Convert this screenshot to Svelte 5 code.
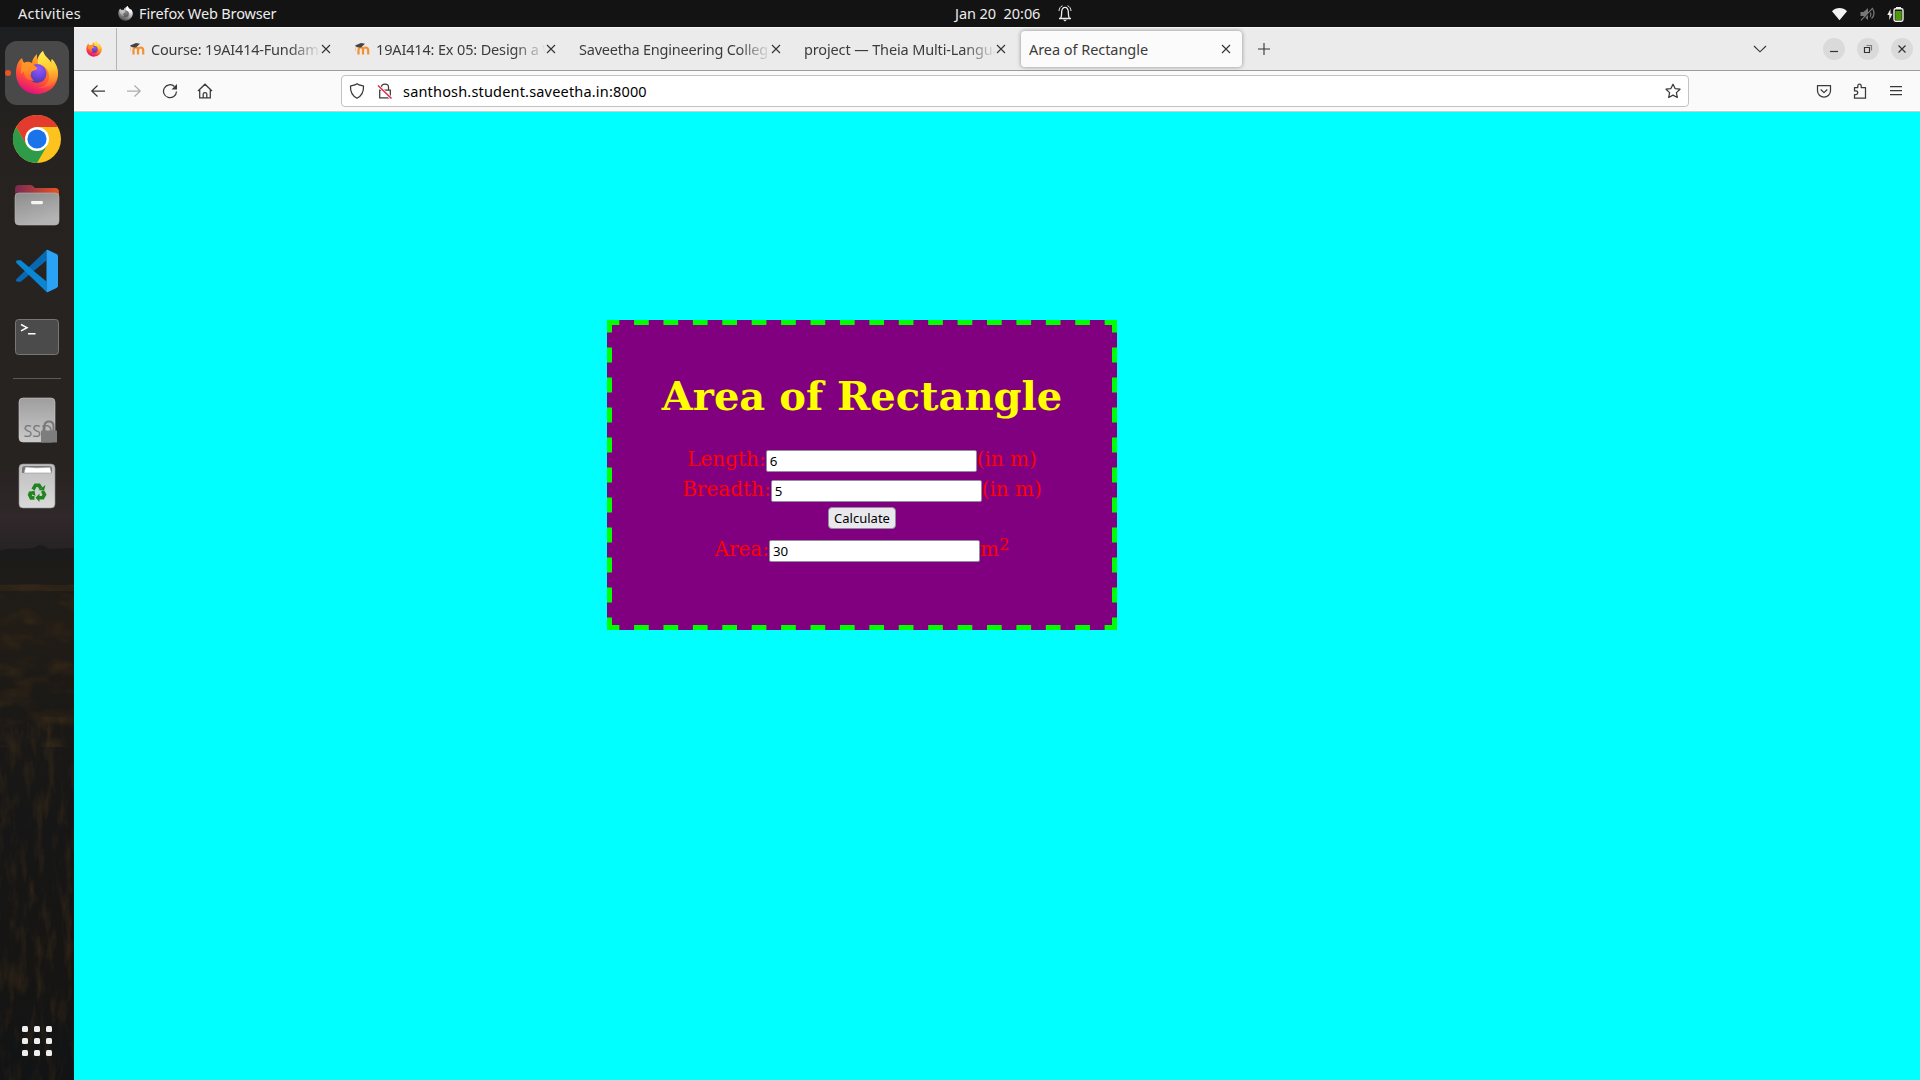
<script>
  const tabs = [
    { title: 'Course: 19AI414-Fundame', moodle: true, cls: 't1' },
    { title: '19AI414: Ex 05: Design a W', moodle: true, cls: 't2' },
    { title: 'Saveetha Engineering Colleg', moodle: false, cls: 't3' },
    { title: 'project — Theia Multi-Langua', moodle: false, cls: 't4' },
    { title: 'Area of Rectangle', moodle: false, active: true, cls: 't5' }
  ];
  let length = $state('6');
  let breadth = $state('5');
  let area = $state('30');
  const calculate = () => (area = String(Number(length) * Number(breadth)));
  const grid = [0, 1, 2];
</script>

{#snippet firefox()}
  <path d="M22 3c-3 3-5 6-5 9-3-2-6-1-8 0-1-2-2-3-2-5C4 9 1 14 1 22c0 12 9 21 21 21s21-9 21-20c0-7-4-12-7-15 0 2 0 3 0 4-2-5-7-7-8-12-3 2-5 6-6 9z" fill="url(#fxBody)" />
  <path d="M28 0c-4 4-6 8-5 13 7 1 12 7 11 14-1 6-5 9-11 10 11 1 20-5 20-15 0-6-3-11-6-14v5C35 8 29 6 28 0z" fill="url(#fxFlame)" />
  <circle cx="22" cy="22.500" r="9.500" fill="url(#fxGlobe)" />
  <path d="M7 7c0 2 1 4 2 5 3-1 7 0 9 1 2 3 5 3 4 5-2 2-6 1-6 5-1 2 1 5 3 7-8 0-10-5-10-9-1 0-2 1-3 2 0-6 1-11 1-16z" fill="url(#fxHead)" />
{/snippet}

{#snippet cross()}
  <svg class="cross" viewBox="0 0 10 10" width="10" height="10"><path d="M1 1l8 8M9 1l-8 8" /></svg>
{/snippet}

<svg class="defs" width="0" height="0" aria-hidden="true">
  <defs>
    <linearGradient id="fxBody" x1="0.8" y1="0" x2="0.4" y2="1">
      <stop offset="0" stop-color="#ffd23c" /><stop offset=".4" stop-color="#ff8a23" /><stop offset=".7" stop-color="#ff4a3c" /><stop offset="1" stop-color="#e3107c" />
    </linearGradient>
    <linearGradient id="fxFlame" x1="0.3" y1="0" x2="0.4" y2="1">
      <stop offset="0" stop-color="#fff44f" /><stop offset=".5" stop-color="#ffc832" /><stop offset="1" stop-color="#ff8a2a" stop-opacity=".3" />
    </linearGradient>
    <radialGradient id="fxGlobe" cx=".6" cy=".25" r=".8">
      <stop offset="0" stop-color="#9059ff" /><stop offset=".5" stop-color="#7146e0" /><stop offset="1" stop-color="#4a3a9a" />
    </radialGradient>
    <linearGradient id="fxHead" x1="0" y1="0" x2="0" y2="1">
      <stop offset="0" stop-color="#ff9a2a" /><stop offset=".5" stop-color="#ff9126" /><stop offset="1" stop-color="#ff5a34" />
    </linearGradient>
    <linearGradient id="folderBack"><stop offset="0" stop-color="#772953" /><stop offset="1" stop-color="#e95420" /></linearGradient>
    <linearGradient id="grey" x1="0" y1="0" x2=".4" y2="1"><stop offset="0" stop-color="#8c8c8c" /><stop offset="1" stop-color="#b4b4b4" /></linearGradient>
    <linearGradient id="drive" x1="0" y1="0" x2="0" y2="1"><stop offset="0" stop-color="#9e9e9e" /><stop offset="1" stop-color="#cacaca" /></linearGradient>
    <linearGradient id="bin" x1="0" y1="0" x2="0" y2="1"><stop offset="0" stop-color="#bdbdbd" /><stop offset="1" stop-color="#dadada" /></linearGradient>
  </defs>
</svg>

<div class="desktop">
  <header class="topbar">
    <span class="activities">Activities</span>
    <svg class="fxgrey" viewBox="0 0 44 44" width="15" height="15">{@render firefox()}</svg>
    <span class="appname">Firefox Web Browser</span>
    <span class="clock">Jan 20&nbsp; 20:06</span>
    <svg class="bell" viewBox="0 0 14 17" width="14" height="17" fill="none" stroke="#eee">
      <path d="M1 13.500h12M2.800 13c1-2 .7-4 .9-6.500C4 3.500 5 2.300 7 2.300s3 1.200 3.300 4.200c.2 2.500-.1 4.500.9 6.500" stroke-width="1.300" />
      <path d="M1 6C1 3.500 2.500 1.300 4.500.8M13 6c0-2.500-1.500-4.700-3.500-5.200" />
      <path d="M5 14.800h4L7 16.500z" fill="#eee" stroke="none" />
    </svg>
    <svg class="tray" viewBox="0 0 76 18" width="76" height="18">
      <path d="M1 6.200C5 2 12 2 16 6.200L8.500 15.300z" fill="#f2f2f2" />
      <g fill="#777" stroke="none"><path d="M29.500 7h3L37 3v12l-4.500-4h-3z" /></g>
      <path d="M42 4.500c1.400 2.700 1.400 6.300-1.500 9M39.300 7c.8 1.500.8 3 0 4.700M30 15.500L42 3" fill="none" stroke="#777" stroke-width="1.300" />
      <path d="M30.800 15.800L41 5.300" stroke="#131313" stroke-width="1" />
      <path d="M59.500 4l-3.200 6h2v5l3.200-6.200h-2z" fill="#f2f2f2" />
      <path d="M65 2h5v2h-5z" fill="#f2f2f2" />
      <rect x="63" y="3.700" width="9" height="12.600" rx="1.700" fill="#131313" stroke="#f2f2f2" stroke-width="1.400" />
      <rect x="64.300" y="6" width="6.400" height="9" fill="#4e9a06" />
    </svg>
  </header>

  <div class="main">
    <nav class="dock">
      <svg class="wall" viewBox="0 0 74 1053" width="74" height="1053" preserveAspectRatio="none" aria-hidden="true">
        <defs>
          <filter id="grass" x="0" y="0" width="1" height="1" color-interpolation-filters="sRGB">
            <feTurbulence type="fractalNoise" baseFrequency=".11 .03" numOctaves="4" seed="8" />
            <feColorMatrix values="0 0 0 0 .32  0 0 0 0 .22  0 0 0 0 .11  2.600 0 0 0 -1.200" />
          </filter>
          <filter id="field" x="0" y="0" width="1" height="1" color-interpolation-filters="sRGB">
            <feTurbulence type="fractalNoise" baseFrequency=".03 .06" numOctaves="3" seed="3" />
            <feColorMatrix values="0 0 0 0 .32  0 0 0 0 .22  0 0 0 0 .09  2.600 0 0 0 -1.200" />
          </filter>
        </defs>
        <path d="M0 524c8-3 12-2 18-2l16-1 5-3 6 1 3 3 26-1v12H0z" fill="#1b1b1c" />
        <rect y="557" width="74" height="163" filter="url(#field)" opacity=".35" />
        <rect y="690" width="74" height="363" filter="url(#grass)" opacity=".35" />
        <rect y="558" width="74" height="6" fill="#48351c" opacity=".3" />
      </svg>
      <div class="slot"><svg viewBox="0 40 74 66" width="74" height="66">
        <rect x="5" y="41" width="64" height="64" rx="12" fill="#494949" />
        <circle cx="8" cy="73" r="3" fill="#e95420" />
        <g transform="translate(15 51)">{@render firefox()}</g>
      </svg></div>
      <div class="slot"><svg viewBox="-37 -33 74 66" width="74" height="66">
        <circle r="24" fill="#fcc31e" />
        <path d="M-20.800-12A24 24 0 0 1 20.800-12H0L-10.400 6z" fill="#e33b2e" />
        <path d="M-20.800-12A24 24 0 0 0 0 24L10.400 6 0 12-10.400 6z" fill="#2d9b47" />
        <circle r="12" fill="#fff" /><circle r="9.600" fill="#1a73e8" />
      </svg></div>
      <div class="slot"><svg viewBox="0 172 74 66" width="74" height="66">
        <path d="M15 204v-15q0-4 4-4h11.500q2 0 3 1.500l1.500 1.500h20q4 0 4 4v12z" fill="url(#folderBack)" />
        <rect x="15" y="193" width="44" height="32" rx="4" fill="url(#grey)" stroke="#bbb" stroke-width=".6" />
        <rect x="31" y="201" width="12" height="3.200" rx="1.400" fill="#f5f5f5" />
      </svg></div>
      <div class="slot"><svg viewBox="0 238 74 66" width="74" height="66">
        <path d="M16.500 281.500q-1-1.500 0-2.500L46.500 250v10.500L21 281.500q-1 .8-2 .3z" fill="#0868b0" />
        <path d="M16.500 260.500q-1 1.500 0 2.500L46.500 292v-10.500L21 260.500q-1-.8-2-.3z" fill="#0a86d2" />
        <path d="M46.500 250q.5-.3 1.500 0l8.500 4q1.500.8 1.500 2.300v29.400q0 1.500-1.500 2.300L48 292q-1 .3-1.500 0z" fill="#2aa2f5" />
      </svg></div>
      <div class="slot"><svg viewBox="0 304 74 66" width="74" height="66">
        <rect x="15.500" y="319.500" width="43" height="35" rx="3" fill="#4b4b4b" stroke="#777" />
        <path d="M21 324.500l6 3.200-6 3.200M28 333.800h7.500" fill="none" stroke="#fff" stroke-width="1.500" />
      </svg></div>
      <div class="sep"></div>
      <div class="slot"><svg viewBox="0 387 74 66" width="74" height="66">
        <rect x="19" y="398" width="36" height="44" rx="4" fill="url(#drive)" stroke="#c9c9c9" stroke-width=".6" />
        <text class="ssd" x="23.500" y="436.500">SSD</text>
        <path d="M44.500 431v-5q0-4.500 4.500-4.500t4.500 4.500v5" fill="none" stroke="#777" stroke-width="2" />
        <rect x="41" y="430.500" width="16" height="12" rx=".5" fill="#7d7d7d" />
      </svg></div>
      <div class="slot"><svg viewBox="0 453 74 66" width="74" height="66">
        <rect x="19" y="464" width="36" height="44" rx="4" fill="url(#bin)" stroke="#8e8e8e" stroke-width=".6" />
        <path d="M22 473v-4q0-3 3-3h24q3 0 3 3v4z" fill="#777" />
        <path d="M24 473l1.500-6 11 .8 13.500-.6 1.500 5.800z" fill="#fff" stroke="#999" stroke-width=".6" />
        <g fill="none" stroke="#208520" stroke-width="3.600">
          <path d="M33 489.500l2.500-4.300h3.500l2 3.300" />
          <path d="M42.500 491l2 3.600-1.800 3.200h-4.500M34.500 497.900h-3.300l-1.500-3 1.600-3" />
        </g>
        <path d="M38.500 490.300l5.500.3 1.500-5.500zM39.500 493.500v8.600l-4-4.300zM28 492.500l6.500-2 1 5.500z" fill="#208520" />
      </svg></div>
      <svg class="apps" viewBox="0 0 30 30" width="30" height="30">
        {#each grid as r}{#each grid as c}<rect x={c * 12} y={r * 12} width="6" height="6" rx="1.500" fill="#eee" />{/each}{/each}
      </svg>
    </nav>

    <section class="browser">
      <div class="tabbar">
        <div class="pinned"><svg viewBox="0 0 44 44" width="16" height="16">{@render firefox()}</svg></div>
        {#each tabs as tab}
          <div class="tab {tab.cls}" class:active={tab.active}>
            {#if tab.moodle}
              <svg class="moodle" viewBox="0 0 16 14" width="16" height="14">
                <path d="M4.500 12.500V8Q4.500 5.500 6.800 5.500T9 8v4.500M9 8.500q0-3 2.600-3t2.600 3v4" fill="none" stroke="#f98012" stroke-opacity=".85" stroke-width="2.200" />
                <path d="M1 3.500L7 1l4 .8-4 3.700-4-.3z" fill="#444" />
                <path d="M1.500 4v5" stroke="#e8b9a0" stroke-width=".7" />
              </svg>
            {/if}
            <span class="title">{tab.title}</span>
            {@render cross()}
          </div>
        {/each}
        <svg class="plus" viewBox="0 0 12 12" width="12" height="12"><path d="M6 0v12M0 6h12" /></svg>
        <svg class="chev" viewBox="0 0 14 8" width="14" height="8"><path d="M1 1l6 5.800L13 1" /></svg>
        <div class="win"><svg viewBox="0 0 22 22" width="22" height="22"><path d="M7 13.500h8" /></svg></div>
        <div class="win"><svg viewBox="0 0 22 22" width="22" height="22"><path d="M7.500 9.500h5v5h-5z" /><path d="M9.500 7.500h5v5" opacity=".55" /></svg></div>
        <div class="win"><svg viewBox="0 0 22 22" width="22" height="22"><path d="M7.500 7.500l7 7M14.500 7.500l-7 7" /></svg></div>
      </div>

      <div class="toolbar">
        <svg class="ico" viewBox="0 0 16 16"><path d="M15 8H1.800M7.500 2.500L1.800 8l5.700 5.500" /></svg>
        <svg class="ico dim" viewBox="0 0 16 16"><path d="M1 8h13.200M8.500 2.500L14.200 8l-5.700 5.500" /></svg>
        <svg class="ico" viewBox="0 0 16 16"><path d="M12.500 3.500A6.500 6.500 0 1 0 14.500 8.500" /><path d="M15 1v5.500H9.500z" fill="#3a3a3a" stroke="none" /></svg>
        <svg class="ico home" viewBox="0 0 16 16"><path d="M1 8l7-6.800L15 8M2.700 6.800V14.800h10.600V6.800M6.200 14.500v-3.500q0-1.500 1.800-1.500t1.800 1.500v3.500" /></svg>
        <div class="urlbar">
          <svg class="ico" viewBox="0 0 16 16"><path d="M8 .8c2 1.500 4.500 1.700 6.500 2.200.3 5.500-1.500 9.700-6.500 12.200C3 12.700 1.200 8.500 1.500 3 3.500 2.500 6 2.300 8 .8z" /></svg>
          <svg class="ico lock" viewBox="0 0 16 16"><path d="M4.500 7V4Q4.500 1 8 1t3.500 3v3M2.700 7.200h10.600v7.600H2.700z" /><path d="M1 2.500l13.500 13" stroke="#fff" stroke-width="3" /><path d="M1 2.500l13.500 13" stroke="#e22850" stroke-width="1.500" /></svg>
          <span class="url">santhosh.student.saveetha.in:8000</span>
          <svg class="ico" viewBox="0 0 16 16"><path d="M8 1.200l2.100 4.400 4.900.6-3.600 3.400.9 4.900L8 12.100l-4.300 2.400.9-4.900L1 6.200l4.900-.6z" stroke-linejoin="round" /></svg>
        </div>
        <svg class="ico" viewBox="0 0 16 16"><path d="M1.500 2.700h13v5A6.500 6.500 0 0 1 1.500 7.700zM4.700 6.500L8 9.600l3.300-3.100" stroke-linejoin="round" /></svg>
        <svg class="ico" viewBox="0 0 16 16"><path d="M2.500 15.200v-3.700h1.200q2 0 2-1.800t-2-1.800H2.500V4.500h3.300V3q0-1.800 1.700-1.800T9.200 3v1.500h4.300v10.700z" stroke-linejoin="round" /></svg>
        <svg class="ico" viewBox="0 0 16 16"><path d="M2 3.500h12M2 7.500h12M2 11.500h12" /></svg>
      </div>

      <div class="page">
        <div class="card">
          <svg class="dashes" viewBox="0 0 510 310" width="510" height="310" aria-hidden="true">
            <path class="h" d="M0 2.500H510M0 307.500H510" />
            <path class="v" d="M2.500 0V310M507.500 0V310" />
          </svg>
          <h1>Area of Rectangle</h1>
          <div class="row"><span>Length:</span><input bind:value={length} /><span>(in m)</span></div>
          <div class="row"><span>Breadth:</span><input bind:value={breadth} /><span>(in m)</span></div>
          <div class="row btn"><button onclick={calculate}>Calculate</button></div>
          <div class="row"><span>Area:</span><input bind:value={area} /><span>m<sup>2</sup></span></div>
        </div>
      </div>
    </section>
  </div>
</div>

<style>
  :global(body) { margin: 0; overflow: hidden; }
  .defs { position: absolute; }
  .desktop {
    width: 1920px; height: 1080px; display: flex; flex-direction: column;
    font-family: "Noto Sans", "Open Sans", sans-serif; font-size: 14.500px; overflow: hidden;
  }
  svg { display: block; flex: none; }
  .topbar { height: 27px; background: #131313; color: #ececec; display: flex; align-items: center; flex: none; white-space: nowrap; }
  .topbar span { line-height: 27px; }
  .activities { margin-left: 18px; width: 100px; letter-spacing: .25px; }
  .fxgrey { filter: grayscale(1) brightness(1.2); }
  .appname { margin-left: 6px; width: 816px; letter-spacing: -.15px; }
  .clock { width: 103px; letter-spacing: -.05px; }
  .bell { margin-top: -1px; }
  .tray { margin-left: auto; margin-right: 13px; }

  .main { flex: 1; display: flex; min-height: 0; }
  .dock {
    width: 74px; flex: none; padding-top: 13px; box-sizing: border-box; position: relative;
    display: flex; flex-direction: column; align-items: center;
    background: linear-gradient(#1d1e20 0, #25221f 110px, #272321 330px, #272321 440px, #30282a 490px, #272324 522px, #1d1b19 530px, #211c16 600px, #1b1916 680px, #161616 800px, #161513 940px, #111315 1053px);
  }
  .wall { position: absolute; left: 0; top: 0; }
  .slot { position: relative; width: 74px; height: 66px; flex: none; }
  .sep { position: relative; width: 48px; height: 1px; margin: 8px 0; background: #5c5a58; flex: none; }
  .ssd { font: 16px "Open Sans", sans-serif; fill: #777; }
  .apps { position: relative; margin-top: auto; margin-bottom: 24px; }

  .browser { flex: 1; display: flex; flex-direction: column; min-width: 0; }
  .tabbar { height: 44px; box-sizing: border-box; flex: none; background: #ebebeb; border-top: 1px solid #f9f9f9; border-bottom: 1px solid #9d9d9d; display: flex; align-items: center; }
  .pinned { width: 43px; height: 100%; box-sizing: border-box; border-right: 1px solid #b4b4b4; display: flex; align-items: center; padding-left: 12px; }
  .tab { width: 221px; height: 36px; margin: 0 2px; padding: 0 11px 0 8px; box-sizing: border-box; display: flex; align-items: center; border-radius: 4px; color: #3c3c3c; flex: none; }
  .t1 { margin-left: 4px; }
  .active { background: #fbfbfb; box-shadow: 0 0 4px rgba(0, 0, 0, .4); }
  .moodle { margin-left: 0; margin-right: 6px; }
  .title { flex: 1; min-width: 0; overflow: hidden; white-space: nowrap; line-height: 22px; letter-spacing: -.05px; }
  .t1 .title { letter-spacing: -.2px; }
  .t2 .title { letter-spacing: -.15px; }
  .t3 .title { letter-spacing: -.22px; }
  .t4 .title { letter-spacing: -.14px; }
  .tab:not(.active) .title { -webkit-mask-image: linear-gradient(to left, transparent, #000 32px); mask-image: linear-gradient(to left, transparent, #000 32px); }
  .cross path, .plus path, .chev path { fill: none; stroke: #333; stroke-width: 1.100; }
  .plus { margin-left: 14px; }
  .chev { margin-left: auto; margin-right: 56px; }
  .win { width: 22px; height: 22px; border-radius: 50%; background: #dadada; margin-right: 12px; flex: none; }
  .win:last-child { margin-right: 7px; }
  .win path { fill: none; stroke: #333; stroke-width: 1.200; }

  .toolbar { height: 41px; box-sizing: border-box; flex: none; background: #fafafa; border-bottom: 1px solid #ccc; display: flex; align-items: center; padding: 0 16px; }
  .ico { width: 16px; height: 16px; fill: none; stroke: #3a3a3a; stroke-width: 1.250; }
  .toolbar > .ico + .ico { margin-left: 20px; }
  .toolbar > .ico.home { margin-left: 19px; }
  .dim { opacity: .4; }
  .urlbar { width: 1348px; height: 32px; box-sizing: border-box; margin: 0 127px 0 128px; border: 1px solid #c2c2c2; border-radius: 4px; background: #fff; display: flex; align-items: center; padding: 0 7px; flex: none; }
  .urlbar .lock { margin-left: 12px; }
  .url { flex: 1; margin-left: 10px; color: #000; line-height: 30px; letter-spacing: .18px; }

  .page { flex: 1; background: #00ffff; padding: 208px 0 0 533px; }
  .card { position: relative; width: 510px; height: 310px; box-sizing: border-box; padding-top: 52px; background: #800080; color: #f00; font: 20px "DejaVu Serif", serif; }
  .dashes { position: absolute; left: 0; top: 0; }
  .dashes path { fill: none; stroke: #0f0; stroke-width: 5; }
  .dashes .h { stroke-dasharray: 14.706; stroke-dashoffset: 2.353; }
  .dashes .v { stroke-dasharray: 15; stroke-dashoffset: 2.500; }
  h1 { margin: 0 0 27px; font-size: 40px; line-height: 47px; text-align: center; color: #ff0; font-weight: bold; }
  .row { height: 30px; display: flex; justify-content: center; align-items: center; line-height: 24px; }
  .row span { white-space: pre; margin-top: -4px; }
  input { width: 211px; height: 22px; box-sizing: border-box; border: 1px solid #8f8f9d; border-radius: 2px; padding: 1px 3px; margin: 0; font: 13.300px "Noto Sans", sans-serif; color: #000; background: #fff; outline: none; }
  .btn { padding-bottom: 3px; height: 27px; }
  button { width: 68px; height: 22px; margin: -3px 0 0; padding: 0; box-sizing: border-box; border: 1px solid #8f8f9d; border-radius: 4px; background: #e9e9ed; color: #000; font: 13px "Noto Sans", sans-serif; line-height: 18px; }
  sup { font-size: 16.700px; line-height: 0; position: relative; top: 2px; vertical-align: super; }
</style>
